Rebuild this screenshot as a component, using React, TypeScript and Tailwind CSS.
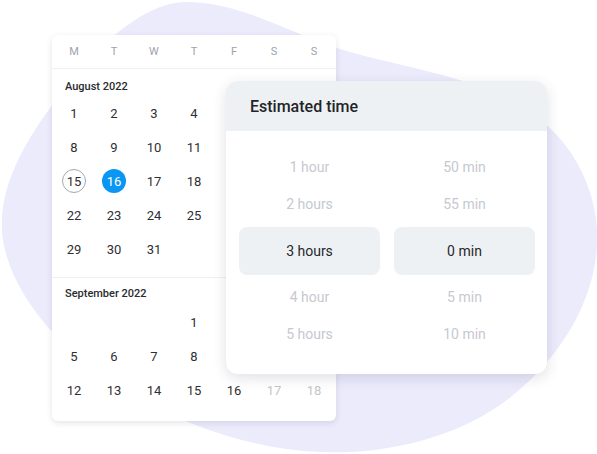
import React from "react";

const font = { fontFamily: "Roboto, 'Liberation Sans', sans-serif" };

type Day = { n?: number; state?: "outline" | "selected" | "muted" };

const august: Day[][] = [
  [{ n: 1 }, { n: 2 }, { n: 3 }, { n: 4 }, {}, {}, {}],
  [{ n: 8 }, { n: 9 }, { n: 10 }, { n: 11 }, {}, {}, {}],
  [{ n: 15, state: "outline" }, { n: 16, state: "selected" }, { n: 17 }, { n: 18 }, {}, {}, {}],
  [{ n: 22 }, { n: 23 }, { n: 24 }, { n: 25 }, {}, {}, {}],
  [{ n: 29 }, { n: 30 }, { n: 31 }, {}, {}, {}, {}],
];

const september: Day[][] = [
  [{}, {}, {}, { n: 1 }, {}, {}, {}],
  [{ n: 5 }, { n: 6 }, { n: 7 }, { n: 8 }, {}, {}, {}],
  [{ n: 12 }, { n: 13 }, { n: 14 }, { n: 15 }, { n: 16 }, { n: 17, state: "muted" }, { n: 18, state: "muted" }],
];

function DayCell({ d }: { d: Day }) {
  if (d.n === undefined) return <div className="h-[34px]" />;
  let cls = "text-[#2e2f33]";
  if (d.state === "outline") cls = "text-[#2e2f33] border border-[#a3a7ae]";
  if (d.state === "selected") cls = "text-white bg-[#0a97f3]";
  if (d.state === "muted") cls = "text-[#c3c6cc]";
  return (
    <div className="h-[34px] flex items-center justify-center">
      <div className={`w-6 h-6 rounded-full flex items-center justify-center text-[13px] leading-none ${cls}`}>
        {d.n}
      </div>
    </div>
  );
}

function Month({ rows }: { rows: Day[][] }) {
  return (
    <div className="grid grid-cols-7 px-[2px]">
      {rows.flat().map((d, i) => (
        <DayCell key={i} d={d} />
      ))}
    </div>
  );
}

function TimeCol({ items, selected }: { items: string[]; selected: string }) {
  return (
    <div className="flex flex-col">
      {items.slice(0, 2).map((t) => (
        <div key={t} className="h-[37px] flex items-center justify-center text-[14px] text-[#c6c9cf]">
          {t}
        </div>
      ))}
      <div className="my-1 h-12 rounded-lg bg-[#eef1f4] flex items-center justify-center text-[14px] text-[#26272b]">
        {selected}
      </div>
      {items.slice(2).map((t) => (
        <div key={t} className="h-[37px] flex items-center justify-center text-[14px] text-[#c6c9cf]">
          {t}
        </div>
      ))}
    </div>
  );
}

export default function App() {
  return (
    <div className="relative w-[597px] h-[454px] overflow-hidden bg-white" style={font}>
      <svg className="absolute inset-0" width="597" height="454" viewBox="0 0 597 454">
        <path
          d="M186 2 C230 2 270 22 320 42 C370 62 440 68 500 95 C570 125 600 190 597 245 C594 310 550 370 500 405 C450 440 380 455 320 452 C260 450 200 430 150 405 C80 370 20 310 5 250 C-10 190 30 130 80 70 C110 35 150 2 186 2 Z"
          fill="#ebebfc"
        />
      </svg>

      <div className="relative ml-[52px] pt-[35px]">
        <div className="w-[284px] h-[386px] bg-white rounded-md shadow-[0_2px_6px_rgba(40,40,80,0.12)]">
          <div className="h-[34px] pt-[2px] border-b border-[#f0f1f3] grid grid-cols-7 px-[2px]">
            {["M", "T", "W", "T", "F", "S", "S"].map((l, i) => (
              <div key={i} className="flex items-center justify-center text-[11px] text-[#9ea3ab]">
                {l}
              </div>
            ))}
          </div>
          <div className="pt-[10px] pb-[11px] border-b border-[#eff0f2]">
            <div className="h-4 flex items-center pl-[13px] mb-[1px] text-[11px] font-medium text-[#2a2b2f]">
              August 2022
            </div>
            <Month rows={august} />
          </div>
          <div className="pt-[8px]">
            <div className="h-4 flex items-center pl-[13px] mb-[3px] text-[11px] font-medium text-[#2a2b2f]">
              September 2022
            </div>
            <Month rows={september} />
          </div>
        </div>

        <div className="absolute left-[174px] top-[81px] w-[321px] h-[293px] bg-white rounded-xl overflow-hidden shadow-[0_4px_14px_rgba(40,40,80,0.14)]">
          <div className="h-[50px] pt-[2px] bg-[#eef1f4] flex items-center pl-6 text-[16px] font-medium text-[#232428]">
            Estimated time
          </div>
          <div className="grid grid-cols-2 gap-[14px] pl-[13px] pr-[12px] pt-[18px]">
            <TimeCol items={["1 hour", "2 hours", "4 hour", "5 hours"]} selected="3 hours" />
            <TimeCol items={["50 min", "55 min", "5 min", "10 min"]} selected="0 min" />
          </div>
        </div>
      </div>
    </div>
  );
}
